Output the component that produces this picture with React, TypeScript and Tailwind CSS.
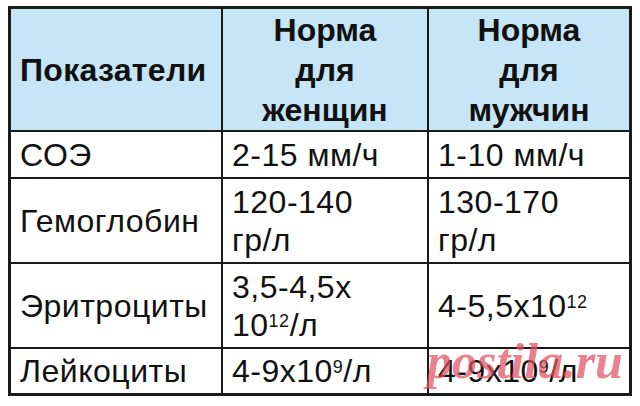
const font = { fontFamily: '"Liberation Sans", Arial, sans-serif' }

function Head({ lines, left }: { lines: string[]; left?: boolean }) {
  return (
    <div
      className={`bg-[#c6e5f7] flex flex-col justify-center font-bold text-[32px] leading-[40px] text-[#111] ${
        left ? 'items-start pl-[9px] tracking-[0.3px]' : 'items-center'
      }`}
    >
      {lines.map((l) => (
        <span key={l}>{l}</span>
      ))}
    </div>
  )
}

function Cell({ children }: { children: React.ReactNode }) {
  return (
    <div className="bg-white flex flex-col justify-center pl-[9px] text-[32px] leading-[38px] tracking-[0.5px] text-[#111]">
      {children}
    </div>
  )
}

export default function App() {
  return (
    <div className="relative w-[640px] h-[406px] bg-white pt-[6px] pl-[8px]" style={font}>
      <div className="w-[624px] border-[3px] border-[#1a1a1a] bg-[#1a1a1a] grid grid-cols-[210px_204px_200px] grid-rows-[121px_45px_83px_83px_44px] gap-[2px]">
        <Head lines={['Показатели']} left />
        <Head lines={['Норма', 'для', 'женщин']} />
        <Head lines={['Норма', 'для', 'мужчин']} />

        <Cell>СОЭ</Cell>
        <Cell>2-15 мм/ч</Cell>
        <Cell>1-10 мм/ч</Cell>

        <Cell>Гемоглобин</Cell>
        <Cell>
          <span>120-140</span>
          <span>гр/л</span>
        </Cell>
        <Cell>
          <span>130-170</span>
          <span>гр/л</span>
        </Cell>

        <Cell>Эритроциты</Cell>
        <Cell>
          <span>3,5-4,5х</span>
          <span>
            10<sup className="text-[18px]">12</sup>/л
          </span>
        </Cell>
        <Cell>
          <span>
            4-5,5х10<sup className="text-[18px]">12</sup>
          </span>
        </Cell>

        <Cell>Лейкоциты</Cell>
        <Cell>
          <span>
            4-9х10<sup className="text-[18px]">9</sup>/л
          </span>
        </Cell>
        <Cell>
          <span>
            4-9х10<sup className="text-[18px]">9</sup>/л
          </span>
        </Cell>
      </div>

      <span
        className="absolute left-[427px] top-[336px] text-[50px] leading-none font-bold italic text-[rgba(224,80,100,0.72)] pointer-events-none"
        style={{ fontFamily: '"Liberation Serif", "Times New Roman", serif' }}
      >
        postila.ru
      </span>
    </div>
  )
}
